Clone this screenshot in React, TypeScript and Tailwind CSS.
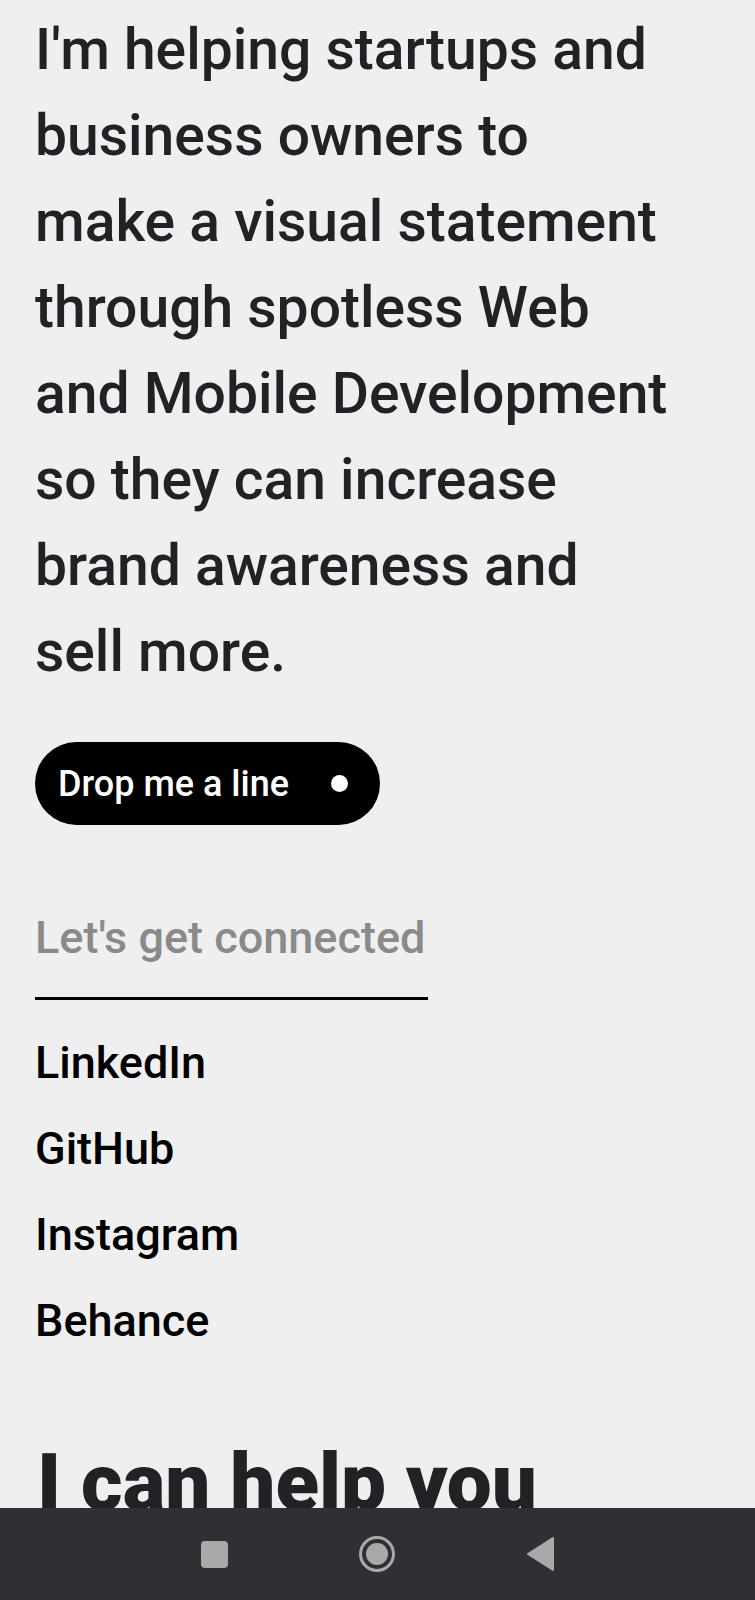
import React from "react";

const lines = [
  "I'm helping startups and",
  "business owners to",
  "make a visual statement",
  "through spotless Web",
  "and Mobile Development",
  "so they can increase",
  "brand awareness and",
  "sell more.",
];

const links = ["LinkedIn", "GitHub", "Instagram", "Behance"];

export default function App() {
  return (
    <div className="w-[755px] h-[1600px] flex flex-col bg-[#efefef] font-['Roboto',sans-serif]">
      {/* PAGE CONTENT */}
      <main className="h-[1508px] overflow-hidden px-[35px] pt-[7px]">
        <p className="text-[57px] font-medium leading-[86px] text-[#212226]">
          {lines.map((l) => (
            <span key={l} className="block whitespace-nowrap">
              {l}
            </span>
          ))}
        </p>

        {/* CTA */}
        <button className="mt-[47px] h-[83px] w-[345px] rounded-full bg-black text-white flex items-center pl-[23px] pr-[32px] justify-between">
          <span className="text-[36px] font-medium">Drop me a line</span>
          <span className="w-[17px] h-[17px] rounded-full bg-white" />
        </button>

        {/* SOCIAL */}
        <section className="mt-[87px] w-[393px]">
          <h3 className="text-[45px] font-medium text-[#8a8a8a] leading-[52px] whitespace-nowrap">
            Let's get connected
          </h3>
          <div className="mt-[33px] h-[3px] bg-black" />
          <ul className="mt-[20px] flex flex-col">
            {links.map((l) => (
              <li key={l} className="text-[45px] font-medium text-black leading-[86px]">
                {l}
              </li>
            ))}
          </ul>
        </section>

        <h2 className="mt-[79px] pl-[2px] text-[80px] font-black text-[#212226] leading-none whitespace-nowrap">
          I can help you
        </h2>
      </main>

      {/* ANDROID NAV BAR */}
      <nav className="h-[92px] bg-[#2f3034] flex items-center justify-center gap-[131px]">
        <span className="w-[27px] h-[27px] rounded-[4px] bg-[#a9a9ab]" />
        <span className="w-[36px] h-[36px] rounded-full border-[3px] border-[#a9a9ab] flex items-center justify-center">
          <span className="w-[22px] h-[22px] rounded-full bg-[#a9a9ab]" />
        </span>
        <svg width="28" height="34" viewBox="0 0 28 34">
          <path d="M27 1 L2 17 L27 33 Z" fill="#a9a9ab" strokeLinejoin="round" stroke="#a9a9ab" strokeWidth="2" />
        </svg>
      </nav>
    </div>
  );
}
